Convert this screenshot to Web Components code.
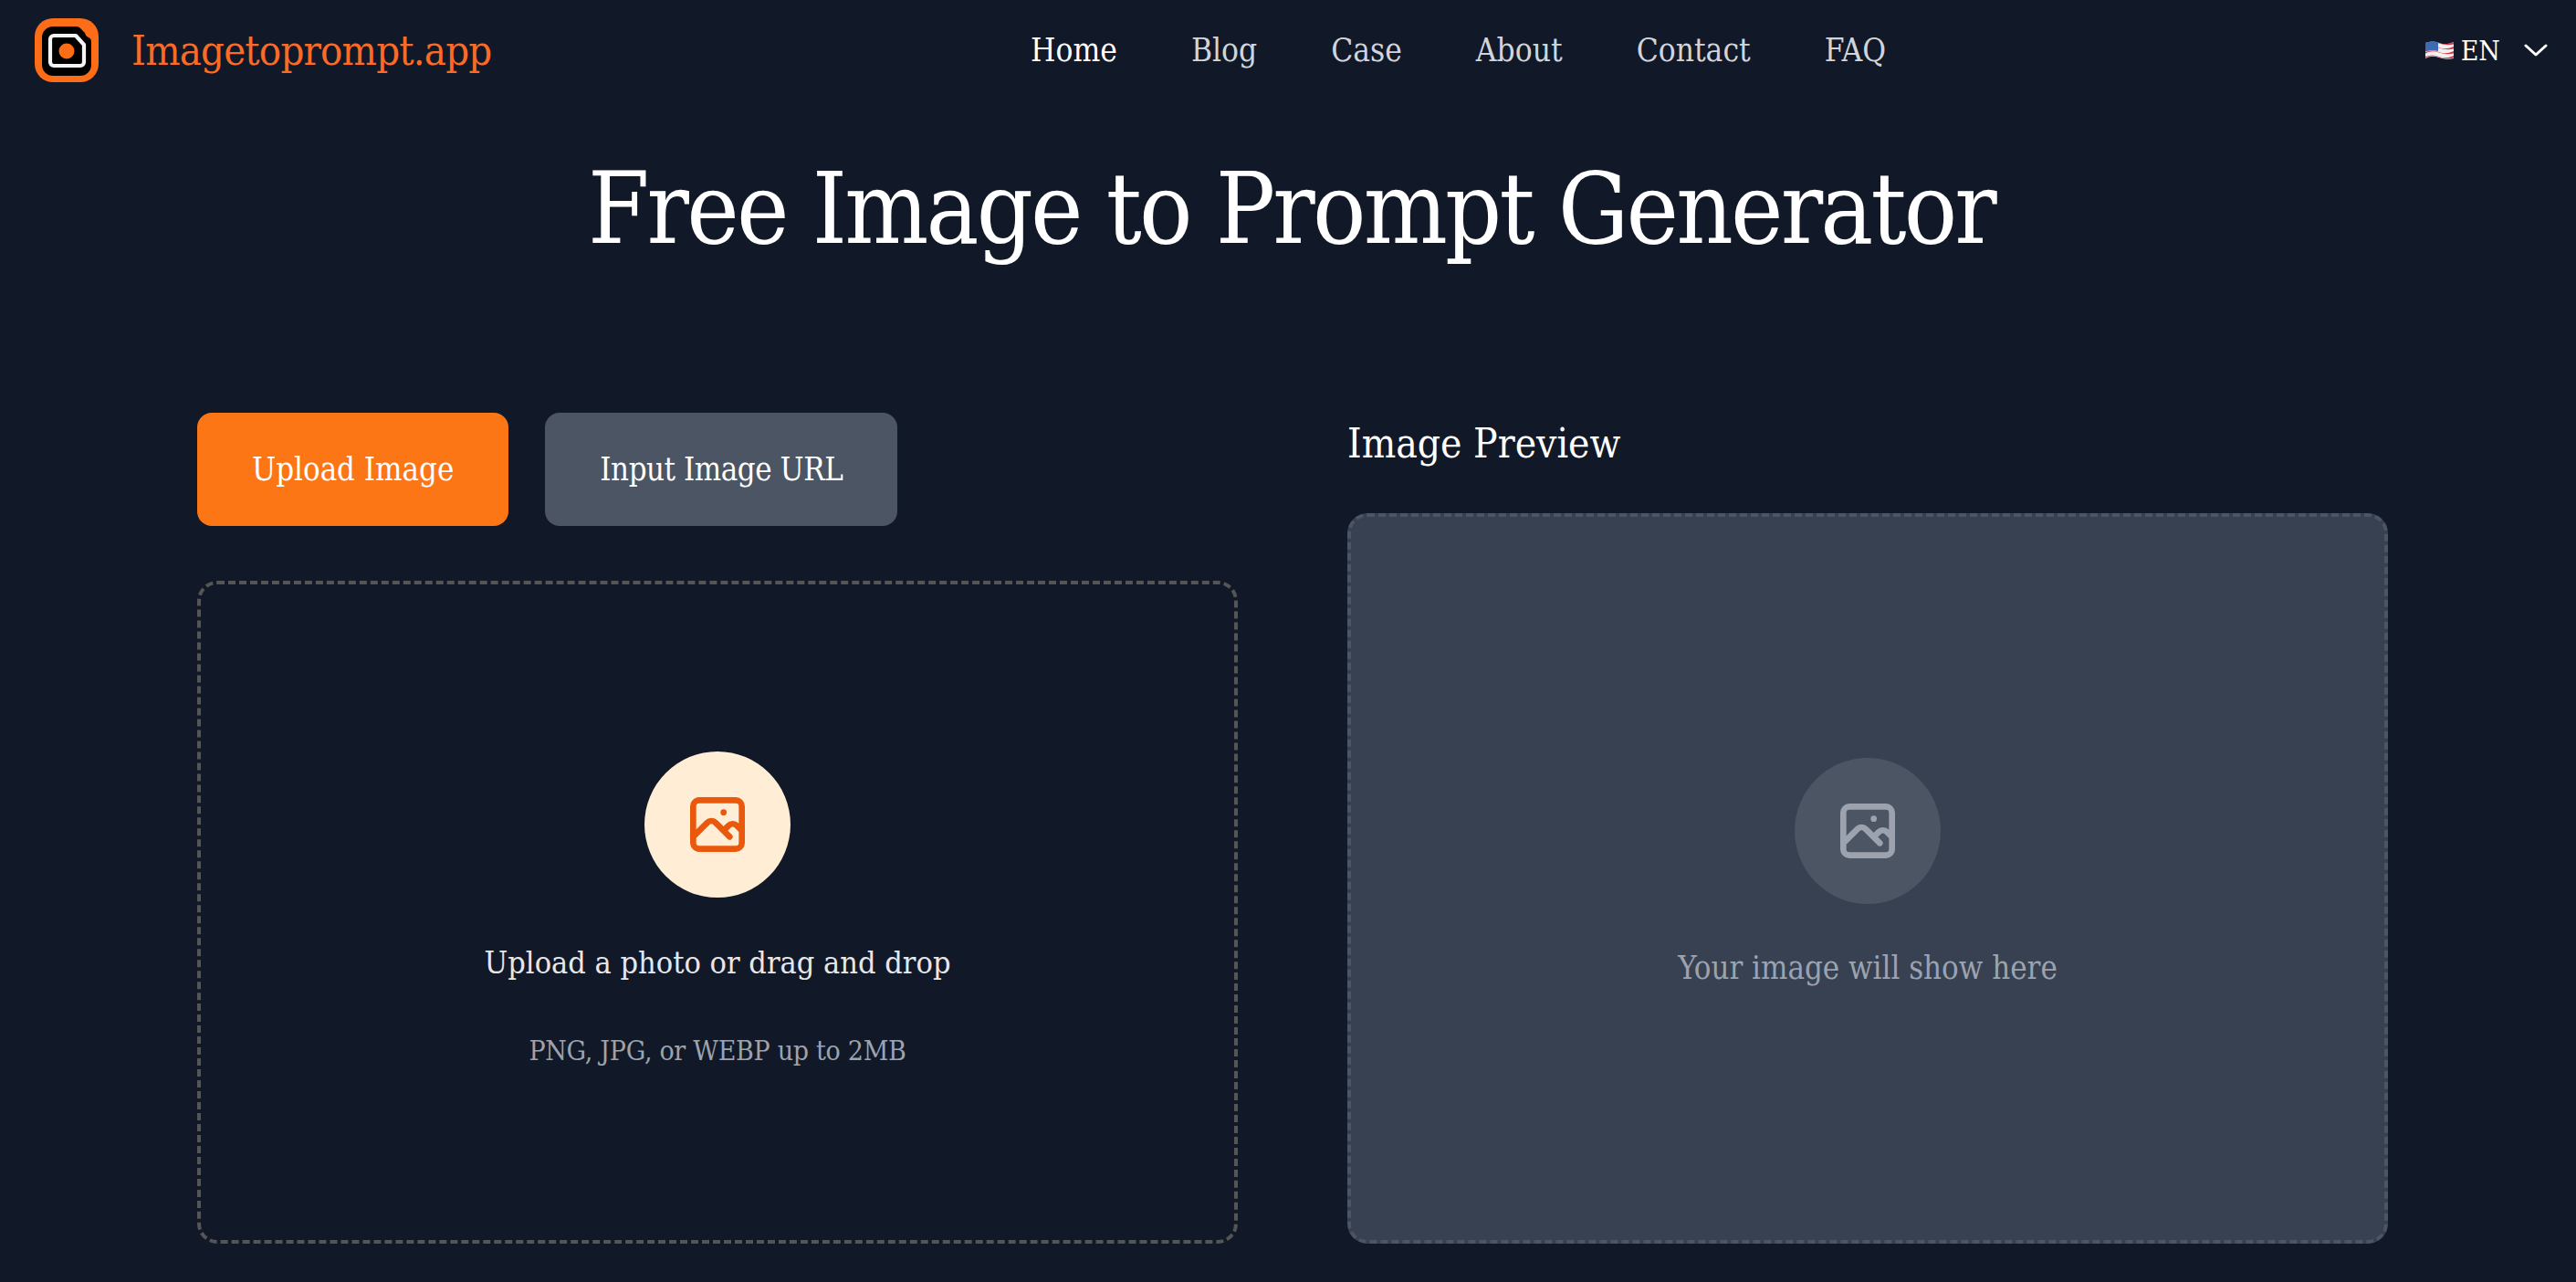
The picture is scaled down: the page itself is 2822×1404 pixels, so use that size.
<!DOCTYPE html>
<html lang="en">
<head>
<meta charset="utf-8">
<title>Free Image to Prompt Generator</title>
<style>
  html, body { margin: 0; background: #111827; }
  body {
    height: 1404px;
    overflow: hidden;
    color: #fff;
    font-family: "DejaVu Serif Condensed", "DejaVu Serif", "Liberation Serif", serif;
    font-stretch: condensed;
  }
</style>
</head>
<body>
<app-header></app-header>
<app-main>
  <photo-tool></photo-tool>
</app-main>

<template id="photo-icon">
  <style>
    :host { display: block; width: 80px; height: 80px; }
    svg { display: block; width: 100%; height: 100%; }
  </style>
  <svg viewBox="0 0 24 24" fill="none" stroke="currentColor" stroke-width="2" stroke-linecap="round" stroke-linejoin="round">
    <path d="M4 16l4.586-4.586a2 2 0 012.828 0L16 16m-2-2l1.586-1.586a2 2 0 012.828 0L20 14m-6-6h.01M6 20h12a2 2 0 002-2V6a2 2 0 00-2-2H6a2 2 0 00-2 2v12a2 2 0 002 2z"/>
  </svg>
</template>

<script>
class AppHeader extends HTMLElement {
  constructor() {
    super();
    const links = ["Home", "Blog", "Case", "About", "Contact", "FAQ"];
    this.attachShadow({ mode: "open" }).innerHTML = `
      <style>
        :host { display: flex; align-items: center; height: 110px; margin-bottom: -2px; padding: 0 31px 0 38px; }
        .brand { display: flex; align-items: center; gap: 36px; width: 1091px; }
        .brand svg { width: 70px; height: 70px; display: block; }
        .brand span { font-size: 45px; letter-spacing: -0.8px; color: #fb6a26; }
        nav { display: flex; gap: 81px; flex: 1; }
        nav a { font-size: 35px; color: #d1d5db; }
        nav a.on { color: #fff; }
        .lang { display: flex; align-items: center; font-size: 30px; color: #fff; }
        .lang .flag { width: 31px; height: 22px; margin-right: 8px; display: block; }
        .lang .chev { width: 26px; height: 14px; margin-left: 26px; display: block; }
      </style>
      <div class="brand">
        <svg viewBox="0 0 70 70">
          <rect width="70" height="70" rx="20" fill="#fd6c16"/>
          <path d="M20 9h25q4 0 6 3l4 4q1 4 4 5 3 1 3 5v25a12 12 0 0 1-12 12H20a12 12 0 0 1-12-12V21a12 12 0 0 1 12-12z" fill="#000"/>
          <path d="M21 19h24l9 10v19a4 4 0 0 1-4 4H21a4 4 0 0 1-4-4V23a4 4 0 0 1 4-4z" fill="none" stroke="#f4f4f4" stroke-width="4.200" stroke-linejoin="round"/>
          <circle cx="35" cy="36" r="8.500" fill="#fd6c16"/>
        </svg>
        <span>Imagetoprompt.app</span>
      </div>
      <nav>${links.map((l, i) => `<a class="${i ? "" : "on"}">${l}</a>`).join("")}</nav>
      <div class="lang">
        <svg class="flag" viewBox="0 0 31 22">
          <path d="M0 3q8-3 15 0t16-1v18q-8 2-16-1t-15 1z" fill="#f0f0f0"/>
          <path d="M0 3q8-3 15 0t16-1v2.500q-8 2-16-1t-15 1zM0 8q8-3 15 0t16-1v2.500q-8 2-16-1t-15 1zM0 13q8-3 15 0t16-1v2.500q-8 2-16-1t-15 1zM0 18q8-3 15 0t16-1v2.500q-8 2-16-1t-15 1z" fill="#d8394b"/>
          <path d="M0 3q7-3 14-.8V12q-7-1.500-14 .5z" fill="#3d6bb3"/>
        </svg>
        <span>EN</span>
        <svg class="chev" viewBox="0 0 26 14"><path d="M2 2l11 10L24 2" fill="none" stroke="#fff" stroke-width="3" stroke-linecap="round" stroke-linejoin="round"/></svg>
      </div>`;
  }
}

class AppMain extends HTMLElement {
  constructor() {
    super();
    this.attachShadow({ mode: "open" }).innerHTML = `
      <style>
        :host { display: block; width: 2400px; margin-left: 216px; }
        h1 { margin: 0; height: 344px; padding: 56px 3px 0 0; box-sizing: border-box; text-align: center; font-size: 108px; line-height: 130px; letter-spacing: -2.8px; font-weight: 400; color: #fff; }
      </style>
      <h1>Free Image to Prompt Generator</h1>
      <slot></slot>`;
  }
}

class TabButton extends HTMLElement {
  constructor() {
    super();
    this.attachShadow({ mode: "open" }).innerHTML = `
      <style>
        :host { display: flex; align-items: center; height: 124px; padding: 0 60px; border-radius: 16px; font-size: 34.500px; letter-spacing: -0.45px; color: #fff; background: #4b5563; }
        :host([active]) { background: #fd7615; letter-spacing: 0; }
      </style>
      <slot></slot>`;
  }
}

class IconCircle extends HTMLElement {
  constructor() {
    super();
    this.attachShadow({ mode: "open" }).innerHTML = `
      <style>
        :host { display: flex; align-items: center; justify-content: center; width: 160px; height: 160px; border-radius: 50%; background: var(--circle); color: var(--ink); }
      </style>
      <photo-icon></photo-icon>`;
  }
}

class PhotoIcon extends HTMLElement {
  constructor() {
    super();
    this.attachShadow({ mode: "open" }).appendChild(
      document.getElementById("photo-icon").content.cloneNode(true)
    );
  }
}

class PhotoTool extends HTMLElement {
  constructor() {
    super();
    this.attachShadow({ mode: "open" }).innerHTML = `
      <style>
        :host { display: grid; grid-template-columns: 1140px 1140px; gap: 120px; }
        .tabs { display: flex; gap: 40px; margin-bottom: 60px; }
        .zone { height: 726px; box-sizing: border-box; border-radius: 22px; display: flex; flex-direction: column; align-items: center; justify-content: center; }
        .drop { border: 4px dashed #555; --circle: #ffedd5; --ink: #ea580c; }
        .show { border: 4px dashed #4b5563; background: #374151; height: 800px; padding-bottom: 8px; --circle: #4b5563; --ink: #9ca3af; }
        h2 { margin: 0 0 42px; font-size: 44px; line-height: 68px; font-weight: 400; color: #fff; }
        p { margin: 0; font-size: 34px; line-height: 54px; }
        .drop p { margin-top: 44px; color: #e5e7eb; }
        .drop small { margin-top: 46px; font-size: 30px; line-height: 48px; letter-spacing: -0.3px; color: #9ca3af; }
        .show p { margin-top: 43px; font-size: 34.500px; color: #9ca3af; }
      </style>
      <section>
        <div class="tabs">
          <tab-button active>Upload Image</tab-button>
          <tab-button>Input Image URL</tab-button>
        </div>
        <div class="zone drop">
          <icon-circle></icon-circle>
          <p>Upload a photo or drag and drop</p>
          <small>PNG, JPG, or WEBP up to 2MB</small>
        </div>
      </section>
      <section>
        <h2>Image Preview</h2>
        <div class="zone show">
          <icon-circle></icon-circle>
          <p>Your image will show here</p>
        </div>
      </section>`;
  }
}

customElements.define("photo-icon", PhotoIcon);
customElements.define("icon-circle", IconCircle);
customElements.define("tab-button", TabButton);
customElements.define("app-header", AppHeader);
customElements.define("app-main", AppMain);
customElements.define("photo-tool", PhotoTool);
</script>
</body>
</html>
